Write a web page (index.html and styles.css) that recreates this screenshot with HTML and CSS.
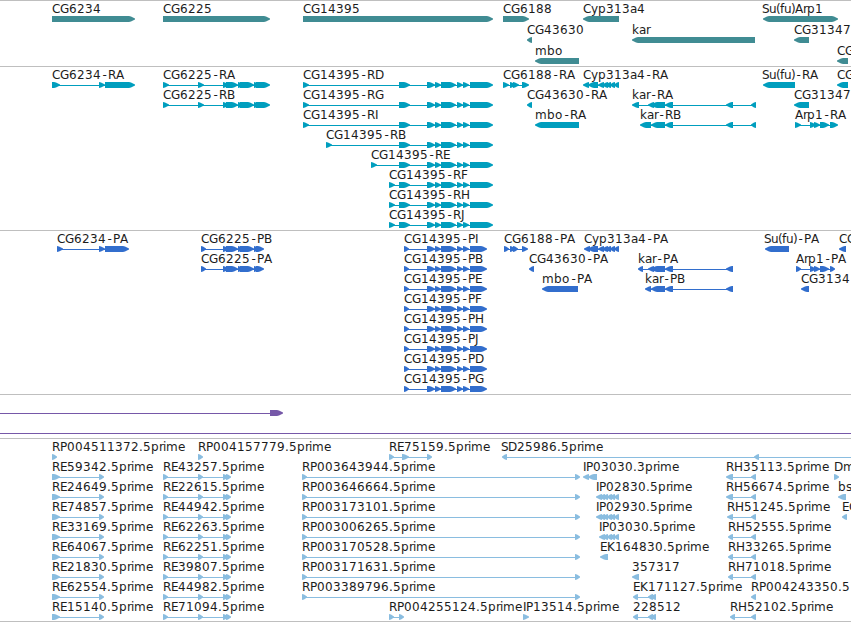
FILE: index.html
```
<!DOCTYPE html>
<html lang="en">
<head>
<meta charset="utf-8">
<title>Genome tracks</title>
<link rel="stylesheet" href="styles.css">
</head>
<body>

<div class="browser">
  <div class="track genes"><svg id="genes"></svg></div>
  <div class="track transcripts"><svg id="transcripts"></svg></div>
  <div class="track proteins"><svg id="proteins"></svg></div>
  <div class="track insertions"><svg id="insertions"></svg></div>
  <div class="track ests"><svg id="ests"></svg></div>
</div>

<script src="tracks.js"></script>
</body>
</html>
```
FILE: styles.css
```
body {
  margin: 0;
  background-color: #fff;
  font-family: "DejaVu Sans", sans-serif;
  overflow: hidden;
}

.browser {
  display: flex;
  flex-direction: column;
  border-bottom: 1px solid #bfbfbf;
}

.track {
  box-sizing: border-box;
  border-top: 1px solid #bfbfbf;
  overflow: hidden;
}

.track svg {
  display: block;
  width: 100%;
  height: 100%;
}

.track text {
  font-size: 12px;
  fill: #1c1c1c;
}

.track path {
  fill: currentColor;
}

.track rect {
  fill: currentColor;
  shape-rendering: crispEdges;
}

.genes {
  height: 66px;
  color: #408c93;
}

.transcripts {
  height: 164px;
  color: #009ebe;
}

.proteins {
  height: 164px;
  color: #326ecd;
}

.insertions {
  height: 44px;
  color: #7658a8;
}

.ests {
  height: 183px;
  color: #8abde0;
}
```
FILE: tracks.js
```
const NS = 'http://www.w3.org/2000/svg';

// advance of each character in px, digits and the rest are 8
const ADVANCE = {
  G: 9, D: 9, H: 9, A: 8, E: 7, F: 7, P: 7, S: 7, I: 3, J: 4, '-': 7, '.': 4,
  '(': 4, ')': 4, f: 4, u: 7, r: 4, i: 3, m: 12, e: 7, k: 7, a: 7, y: 7, s: 6
};

function add(svg, tag, attrs, text) {
  const el = document.createElementNS(NS, tag);
  for (const key in attrs) el.setAttribute(key, attrs[key]);
  if (text) el.textContent = text;
  svg.appendChild(el);
}

function drawLabel(svg, label, x, y) {
  const xs = [];
  for (const ch of label) {
    xs.push(ch === '-' ? x + 1.5 : x);
    x += ADVANCE[ch] || 8;
  }
  add(svg, 'text', { x: xs.join(' '), y: y }, label);
}

function drawExon(svg, a, b, y, dir) {
  const head = Math.min(6, b - a);
  // s flips the arrow for features on the reverse strand
  const s = dir === '<' ? -1 : 1;
  const tail = s > 0 ? a : b;
  const tip = s > 0 ? b : a;
  const neck = tip - s * head;
  const shoulder = neck + s * 2;
  add(svg, 'path', {
    d: `M${tail} ${y}V${y + 6}H${neck}L${shoulder} ${y + 5.6}L${tip} ${y + 3.4}V${y + 2.6}L${shoulder} ${y + 0.4}L${neck} ${y}Z`
  });
}

// feature: [row, label, label x, direction, 'start-end start-end ...']
function drawTrack(id, pitch, features) {
  const svg = document.getElementById(id);
  for (const [row, label, x, dir, parts] of features) {
    const y = 15 + row * pitch;
    const exons = parts.split(' ').map(p => p.split('-').map(Number));
    const start = exons[0][0];
    const end = exons[exons.length - 1][1];
    if (exons.length > 1) {
      add(svg, 'rect', { x: start + 1, y: y + 3, width: end - start - 2, height: 1 });
    }
    exons.forEach(([a, b]) => drawExon(svg, a, b, y, dir));
    drawLabel(svg, label, x, y - 3);
  }
}

drawTrack('genes', 21, [
  [0, 'CG6234', 52, '>', '52-135'],
  [0, 'CG6225', 163, '>', '163-270'],
  [0, 'CG14395', 303, '>', '303-493'],
  [0, 'CG6188', 503, '>', '503-529'],
  [0, 'Cyp313a4', 583, '<', '583-619'],
  [0, 'Su(fu)', 762, '<', '763-796'],
  [0, 'Arp1', 795, '>', '795-838'],
  [1, 'CG43630', 527, '<', '527-532'],
  [1, 'kar', 632, '<', '632-755'],
  [1, 'CG31347', 794, '<', '794-809'],
  [2, 'mbo', 535, '<', '535-579'],
  [2, 'CG', 837, '<', '837-848']
]);

const cg6225 = '223-229 226-238 238-243 240-254 254-259 256-';
const cg14395 = '427-435 435-441 441-456 457-463 463-469 470-';
const cyp = '588-598 598-604 602-608 606-611 610-615 614-619';
const kar = '651-665 665-673 726-733';
const arp = '810-816 814-820 820-829 830-';

drawTrack('transcripts', 20, [
  [0, 'CG6234-RA', 52, '>', '52-60 99-105 105-135'],
  [0, 'CG6225-RA', 163, '>', '163-169 198-204 ' + cg6225 + '270'],
  [1, 'CG6225-RB', 163, '>', '163-169 198-204 ' + cg6225 + '270'],
  ...[['RD', 303], ['RG', 303], ['RI', 303], ['RB', 326], ['RE', 371], ['RF', 389], ['RH', 389], ['RJ', 389]]
    .map(([name, x], i) => [i, 'CG14395-' + name, x, '>', `${x}-${x + 6} 399-410 ${cg14395}493`]),
  [0, 'CG6188-RA', 503, '>', '503-509 510-515 513-519 522-529'],
  [0, 'Cyp313a4-RA', 583, '<', '583-589 ' + cyp],
  [0, 'Su(fu)-RA', 762, '<', '763-795'],
  [0, 'CG', 837, '<', '837-848'],
  [1, 'CG43630-RA', 527, '<', '527-532'],
  [1, 'kar-RA', 632, '<', '632-639 648-654 ' + kar + ' 751-756'],
  [1, 'CG31347', 794, '<', '794-809'],
  [2, 'mbo-RA', 535, '<', '535-579'],
  [2, 'kar-RB', 640, '<', '640-651 ' + kar + ' 751-756'],
  [2, 'Arp1-RA', 795, '>', '795-801 ' + arp + '838']
]);

drawTrack('proteins', 20, [
  [0, 'CG6234-PA', 57, '>', '57-63 99-105 105-129'],
  [0, 'CG6225-PB', 201, '>', '201-206 ' + cg6225 + '264'],
  [1, 'CG6225-PA', 201, '>', '201-206 ' + cg6225 + '264'],
  ...['PI', 'PB', 'PE', 'PF', 'PH', 'PJ', 'PD', 'PG']
    .map((name, i) => [i, 'CG14395-' + name, 404, '>', '404-409 ' + cg14395 + '487']),
  [0, 'CG6188-PA', 504, '>', '504-509 510-515 513-518 522-528'],
  [0, 'Cyp313a4-PA', 584, '<', '584-590 ' + cyp],
  [0, 'Su(fu)-PA', 764, '<', '765-789'],
  [0, 'CG', 839, '<', '839-846'],
  [1, 'CG43630-PA', 529, '<', '529-534'],
  [1, 'kar-PA', 638, '<', '638-643 648-654 ' + kar],
  [1, 'Arp1-PA', 796, '>', '796-801 ' + arp + '835'],
  [2, 'mbo-PA', 542, '<', '542-578'],
  [2, 'kar-PB', 645, '<', '645-651 ' + kar],
  [2, 'CG3134', 801, '<', '801-809']
]);

const insertions = document.getElementById('insertions');
add(insertions, 'rect', { x: 0, y: 18, width: 271, height: 1 });
add(insertions, 'rect', { x: 0, y: 38, width: 851, height: 1 });
drawExon(insertions, 270, 283, 15, '>');

drawTrack('ests', 20, [
  [0, 'RP004511372.5prime', 52, '>', '52-57'],
  [0, 'RP004157779.5prime', 198, '>', '198-203'],
  [0, 'RE75159.5prime', 389, '>', '389-394 402-409 427-432'],
  [0, 'SD25986.5prime', 501, '<', '502-507 754-759 870-875'],
  ...['RE59342', 'RE24649', 'RE74857', 'RE33169', 'RE64067', 'RE21830', 'RE62554', 'RE15140']
    .map((name, i) => [i + 1, name + '.5prime', 52, '>', '52-60 99-104']),
  ...['RE43257', 'RE22615', 'RE44942', 'RE62263', 'RE62251', 'RE39807', 'RE44982', 'RE71094']
    .map((name, i) => [i + 1, name + '.5prime', 163, '>', '163-168 198-203 223-228 226-231']),
  ...['RP003643944', 'RP003646664', 'RP003173101', 'RP003006265', 'RP003170528', 'RP003171631', 'RP003389796']
    .map((name, i) => [i + 1, name + '.5prime', 302, '>', '302-307 575-580']),
  [8, 'RP004255124.5prime', 389, '>', '389-394 399-404'],
  [8, 'IP13514.5prime', 523, '>', '523-529'],
  [1, 'IP03030.3prime', 583, '<', '583-589 588-597'],
  [2, 'IP02830.5prime', 596, '<', '596-602 600-605 603-608 607-612 610-615 614-619'],
  [3, 'IP02930.5prime', 596, '<', '596-602 600-605 603-608 607-612 610-615 614-619'],
  [4, 'IP03030.5prime', 599, '<', '599-605 603-608 607-612 610-615 614-619'],
  [5, 'EK164830.5prime', 600, '<', '600-608'],
  [6, '357317', 632, '<', '632-639'],
  [7, 'EK171127.5prime', 633, '<', '633-638 648-653 651-656'],
  [8, '228512', 633, '<', '633-638 648-653 651-656'],
  [1, 'RH35113.5prime', 726, '<', '726-733 751-756'],
  [2, 'RH56674.5prime', 726, '<', '726-733 751-756'],
  [3, 'RH51245.5prime', 727, '<', '727-733 751-756'],
  [4, 'RH52555.5prime', 728, '<', '728-733 751-756'],
  [5, 'RH33265.5prime', 728, '<', '728-733 751-756'],
  [6, 'RH71018.5prime', 728, '<', '728-733 751-756'],
  [7, 'RP004243350.5', 751, '<', '751-756'],
  [8, 'RH52102.5prime', 730, '<', '730-735 751-756'],
  [1, 'Dm', 834, '>', '834-839'],
  [2, 'bs', 838, '<', '838-846'],
  [3, 'EC', 842, '<', '842-847']
]);
```
